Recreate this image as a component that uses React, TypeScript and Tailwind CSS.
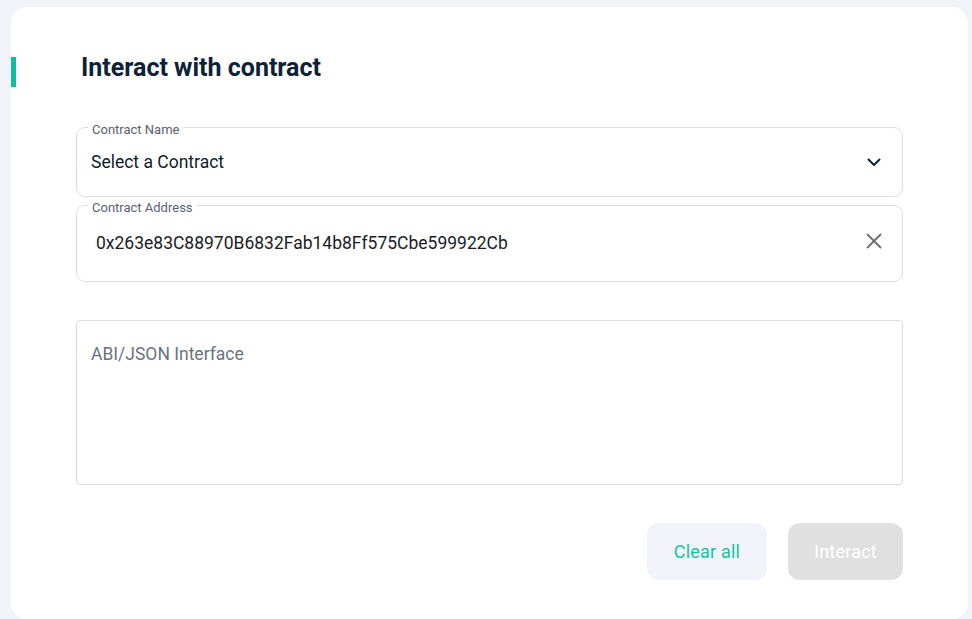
import { useState } from 'react'

const FONT = { fontFamily: 'Roboto, "Liberation Sans", sans-serif' }

function OutlinedField({
  label,
  height,
  children,
}: {
  label: string
  height: string
  children: React.ReactNode
}) {
  return (
    <div className={`relative rounded-[9px] border border-[#dddddd] ${height} flex items-center`}>
      <span className="absolute -top-[5px] left-[11px] bg-white px-[4px] text-[13px] leading-none text-[#5b616e]">
        {label}
      </span>
      {children}
    </div>
  )
}

function Chevron() {
  return (
    <svg width="14" height="9" viewBox="0 0 14 9" fill="none">
      <path d="M1.5 1.5 L7 7 L12.5 1.5" stroke="#0d2137" strokeWidth="2" strokeLinecap="round" strokeLinejoin="round" />
    </svg>
  )
}

function Cross() {
  return (
    <svg width="16" height="16" viewBox="0 0 16 16" fill="none">
      <path d="M1.5 1.5 L14.5 14.5 M14.5 1.5 L1.5 14.5" stroke="#6c6b74" strokeWidth="1.8" strokeLinecap="round" />
    </svg>
  )
}

export default function App() {
  const [address, setAddress] = useState('0x263e83C88970B6832Fab14b8Ff575Cbe599922Cb')

  return (
    <div className="h-[619px] w-full overflow-hidden bg-[#f2f3f8] pl-[11px] pr-[4px] pt-[7px]" style={FONT}>
      <div className="relative h-[612px] rounded-2xl bg-white pt-[48px]">
        <div className="absolute left-0 top-[50px] h-[30px] w-[5px] bg-[#0dbf9f]" />
        <h1 className="ml-[70px] text-[25px] font-bold leading-none text-[#0d2137]">
          Interact with contract
        </h1>

        <div className="mx-[65px] mt-[47px] flex flex-col">
          <OutlinedField label="Contract Name" height="h-[70px]">
            <div className="flex w-full items-center justify-between pl-[14px] pr-[21px]">
              <span className="text-[17.5px] text-[#0f1b2d]">Select a Contract</span>
              <Chevron />
            </div>
          </OutlinedField>

          <div className="mt-[8px]">
            <OutlinedField label="Contract Address" height="h-[77px]">
              <div className="flex w-full items-center justify-between pl-[19px] pr-[20px]">
                <span className="text-[17.5px] text-[#1a1c26]">{address}</span>
                <button className="-mt-[5px]" onClick={() => setAddress('')}>
                  <Cross />
                </button>
              </div>
            </OutlinedField>
          </div>

          <textarea
            className="mt-[38px] h-[165px] w-full resize-none rounded-[4px] border border-[#dddddd] px-[14px] pt-[21px] text-[17.5px] leading-6 text-[#1a1c26] placeholder:text-[#6b7280] focus:outline-none"
            placeholder="ABI/JSON Interface"
          />

          <div className="mt-[38px] flex justify-end gap-[21px]">
            <button className="h-[57px] w-[120px] rounded-[12px] bg-[#f2f3f8] text-[18px] tracking-[0.2px] text-[#14c3a3]">
              Clear all
            </button>
            <button className="h-[57px] w-[115px] rounded-[12px] bg-[#e0e0e0] text-[18px] tracking-[0.2px] text-white" disabled>
              Interact
            </button>
          </div>
        </div>
      </div>
    </div>
  )
}
